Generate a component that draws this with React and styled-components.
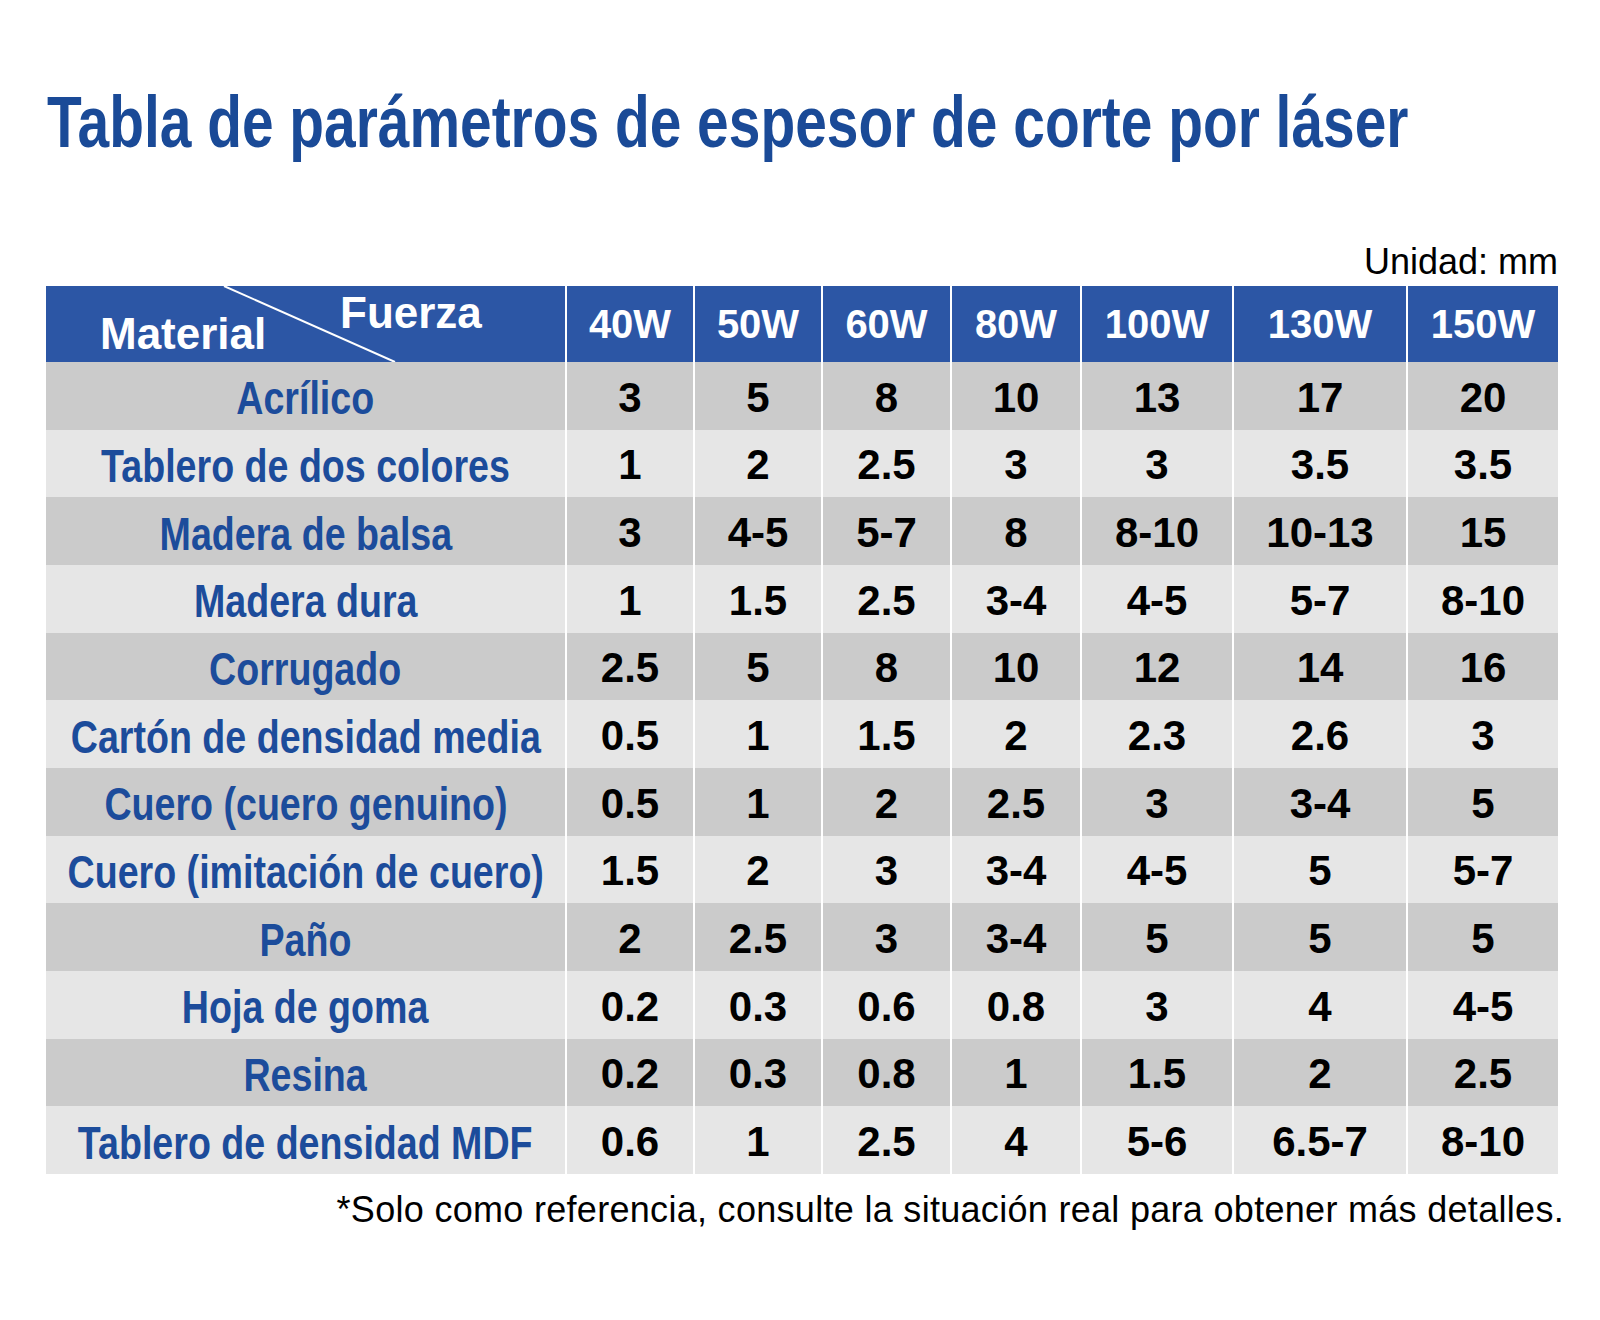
import React from "react";
import styled, { createGlobalStyle } from "styled-components";

const GlobalStyle = createGlobalStyle`
  html, body { margin: 0; padding: 0; background: #ffffff; overflow: hidden; }
  body { font-family: "Liberation Sans", Arial, sans-serif; }
`;

const COLS = "519px 128px 128px 129px 130px 152px 174px 152px";

const Page = styled.div`
  width: 1600px;
  height: 1320px;
  box-sizing: border-box;
  padding: 86px 42px 0 46px;
  display: flex;
  flex-direction: column;
  overflow: hidden;
`;

const Title = styled.h1`
  margin: 0 0 0 1px;
  font-family: "Liberation Sans", Arial, sans-serif;
  font-weight: 700;
  font-size: 72px;
  line-height: 1;
  color: #1a4a97;
  white-space: nowrap;
`;

const Condensed = styled.span`
  display: inline-block;
  transform: scaleX(${(p) => p.$k});
  transform-origin: ${(p) => p.$origin || "center"};
  margin-right: ${(p) => p.$trim || 0}px;
  white-space: nowrap;
`;

const Unit = styled.div`
  margin-top: 86px;
  align-self: flex-end;
  font-size: 36px;
  line-height: 1;
  color: #000;
`;

const Table = styled.div`
  margin-top: 6px;
  display: flex;
  flex-direction: column;
`;

const Row = styled.div`
  display: grid;
  grid-template-columns: ${COLS};
  height: ${(p) => (p.$head ? "76px" : "67.67px")};
  background: ${(p) => (p.$head ? "#2c56a5" : p.$dark ? "#cbcbcb" : "#e6e6e6")};
`;

const Cell = styled.div`
  display: flex;
  align-items: center;
  justify-content: center;
  box-sizing: border-box;
  padding-top: ${(p) => (p.$head ? 0 : 4)}px;
  border-left: ${(p) => (p.$first ? "none" : "2px solid #ffffff")};
  font-family: "Liberation Sans", Arial, sans-serif;
  font-weight: 700;
  font-size: ${(p) => (p.$head ? 40 : 42)}px;
  color: ${(p) => (p.$head ? "#ffffff" : "#000000")};
  white-space: nowrap;
`;

const MaterialName = styled(Cell)`
  font-size: 47px;
  color: #1c4c9b;
  overflow: visible;
`;

const Corner = styled.div`
  position: relative;
  display: grid;
  grid-template-areas: "stack";
  color: #ffffff;
  font-weight: 700;
  font-size: 44px;
  line-height: 1;
`;

const CornerLabel = styled.span`
  grid-area: stack;
  align-self: ${(p) => p.$align};
  margin-left: ${(p) => p.$left}px;
  margin-top: ${(p) => p.$top || 0}px;
  margin-bottom: ${(p) => p.$bottom || 0}px;
  white-space: nowrap;
`;

const Diagonal = styled.svg`
  position: absolute;
  inset: 0;
  width: 100%;
  height: 100%;
  pointer-events: none;
`;

const Footer = styled.div`
  margin-top: 18px;
  margin-right: -6px;
  align-self: flex-end;
  font-size: 36px;
  letter-spacing: 0.3px;
  line-height: 1;
  color: #000;
`;

const powers = ["40W", "50W", "60W", "80W", "100W", "130W", "150W"];

const rows = [
  ["Acrílico", "3", "5", "8", "10", "13", "17", "20"],
  ["Tablero de dos colores", "1", "2", "2.5", "3", "3", "3.5", "3.5"],
  ["Madera de balsa", "3", "4-5", "5-7", "8", "8-10", "10-13", "15"],
  ["Madera dura", "1", "1.5", "2.5", "3-4", "4-5", "5-7", "8-10"],
  ["Corrugado", "2.5", "5", "8", "10", "12", "14", "16"],
  ["Cartón de densidad media", "0.5", "1", "1.5", "2", "2.3", "2.6", "3"],
  ["Cuero (cuero genuino)", "0.5", "1", "2", "2.5", "3", "3-4", "5"],
  ["Cuero (imitación de cuero)", "1.5", "2", "3", "3-4", "4-5", "5", "5-7"],
  ["Paño", "2", "2.5", "3", "3-4", "5", "5", "5"],
  ["Hoja de goma", "0.2", "0.3", "0.6", "0.8", "3", "4", "4-5"],
  ["Resina", "0.2", "0.3", "0.8", "1", "1.5", "2", "2.5"],
  ["Tablero de densidad MDF", "0.6", "1", "2.5", "4", "5-6", "6.5-7", "8-10"],
];

export default function App() {
  return (
    <>
      <GlobalStyle />
      <Page>
        <Title>
          <Condensed $k={0.79} $origin="left center" $trim={-363}>
            Tabla de parámetros de espesor de corte por láser
          </Condensed>
        </Title>
        <Unit>Unidad: mm</Unit>
        <Table>
          <Row $head>
            <Corner>
              <Diagonal viewBox="0 0 519 76" preserveAspectRatio="none">
                <line x1="178" y1="0" x2="349" y2="76" stroke="#ffffff" strokeWidth="2" />
              </Diagonal>
              <CornerLabel $align="start" $left={294} $top={5}>Fuerza</CornerLabel>
              <CornerLabel $align="end" $left={54} $bottom={6}>Material</CornerLabel>
            </Corner>
            {powers.map((p) => (
              <Cell key={p} $head>{p}</Cell>
            ))}
          </Row>
          {rows.map((r, i) => (
            <Row key={r[0]} $dark={i % 2 === 0}>
              <MaterialName $first>
                <Condensed $k={0.8}>{r[0]}</Condensed>
              </MaterialName>
              {r.slice(1).map((v, j) => (
                <Cell key={j}>{v}</Cell>
              ))}
            </Row>
          ))}
        </Table>
        <Footer>*Solo como referencia, consulte la situación real para obtener más detalles.</Footer>
      </Page>
    </>
  );
}
